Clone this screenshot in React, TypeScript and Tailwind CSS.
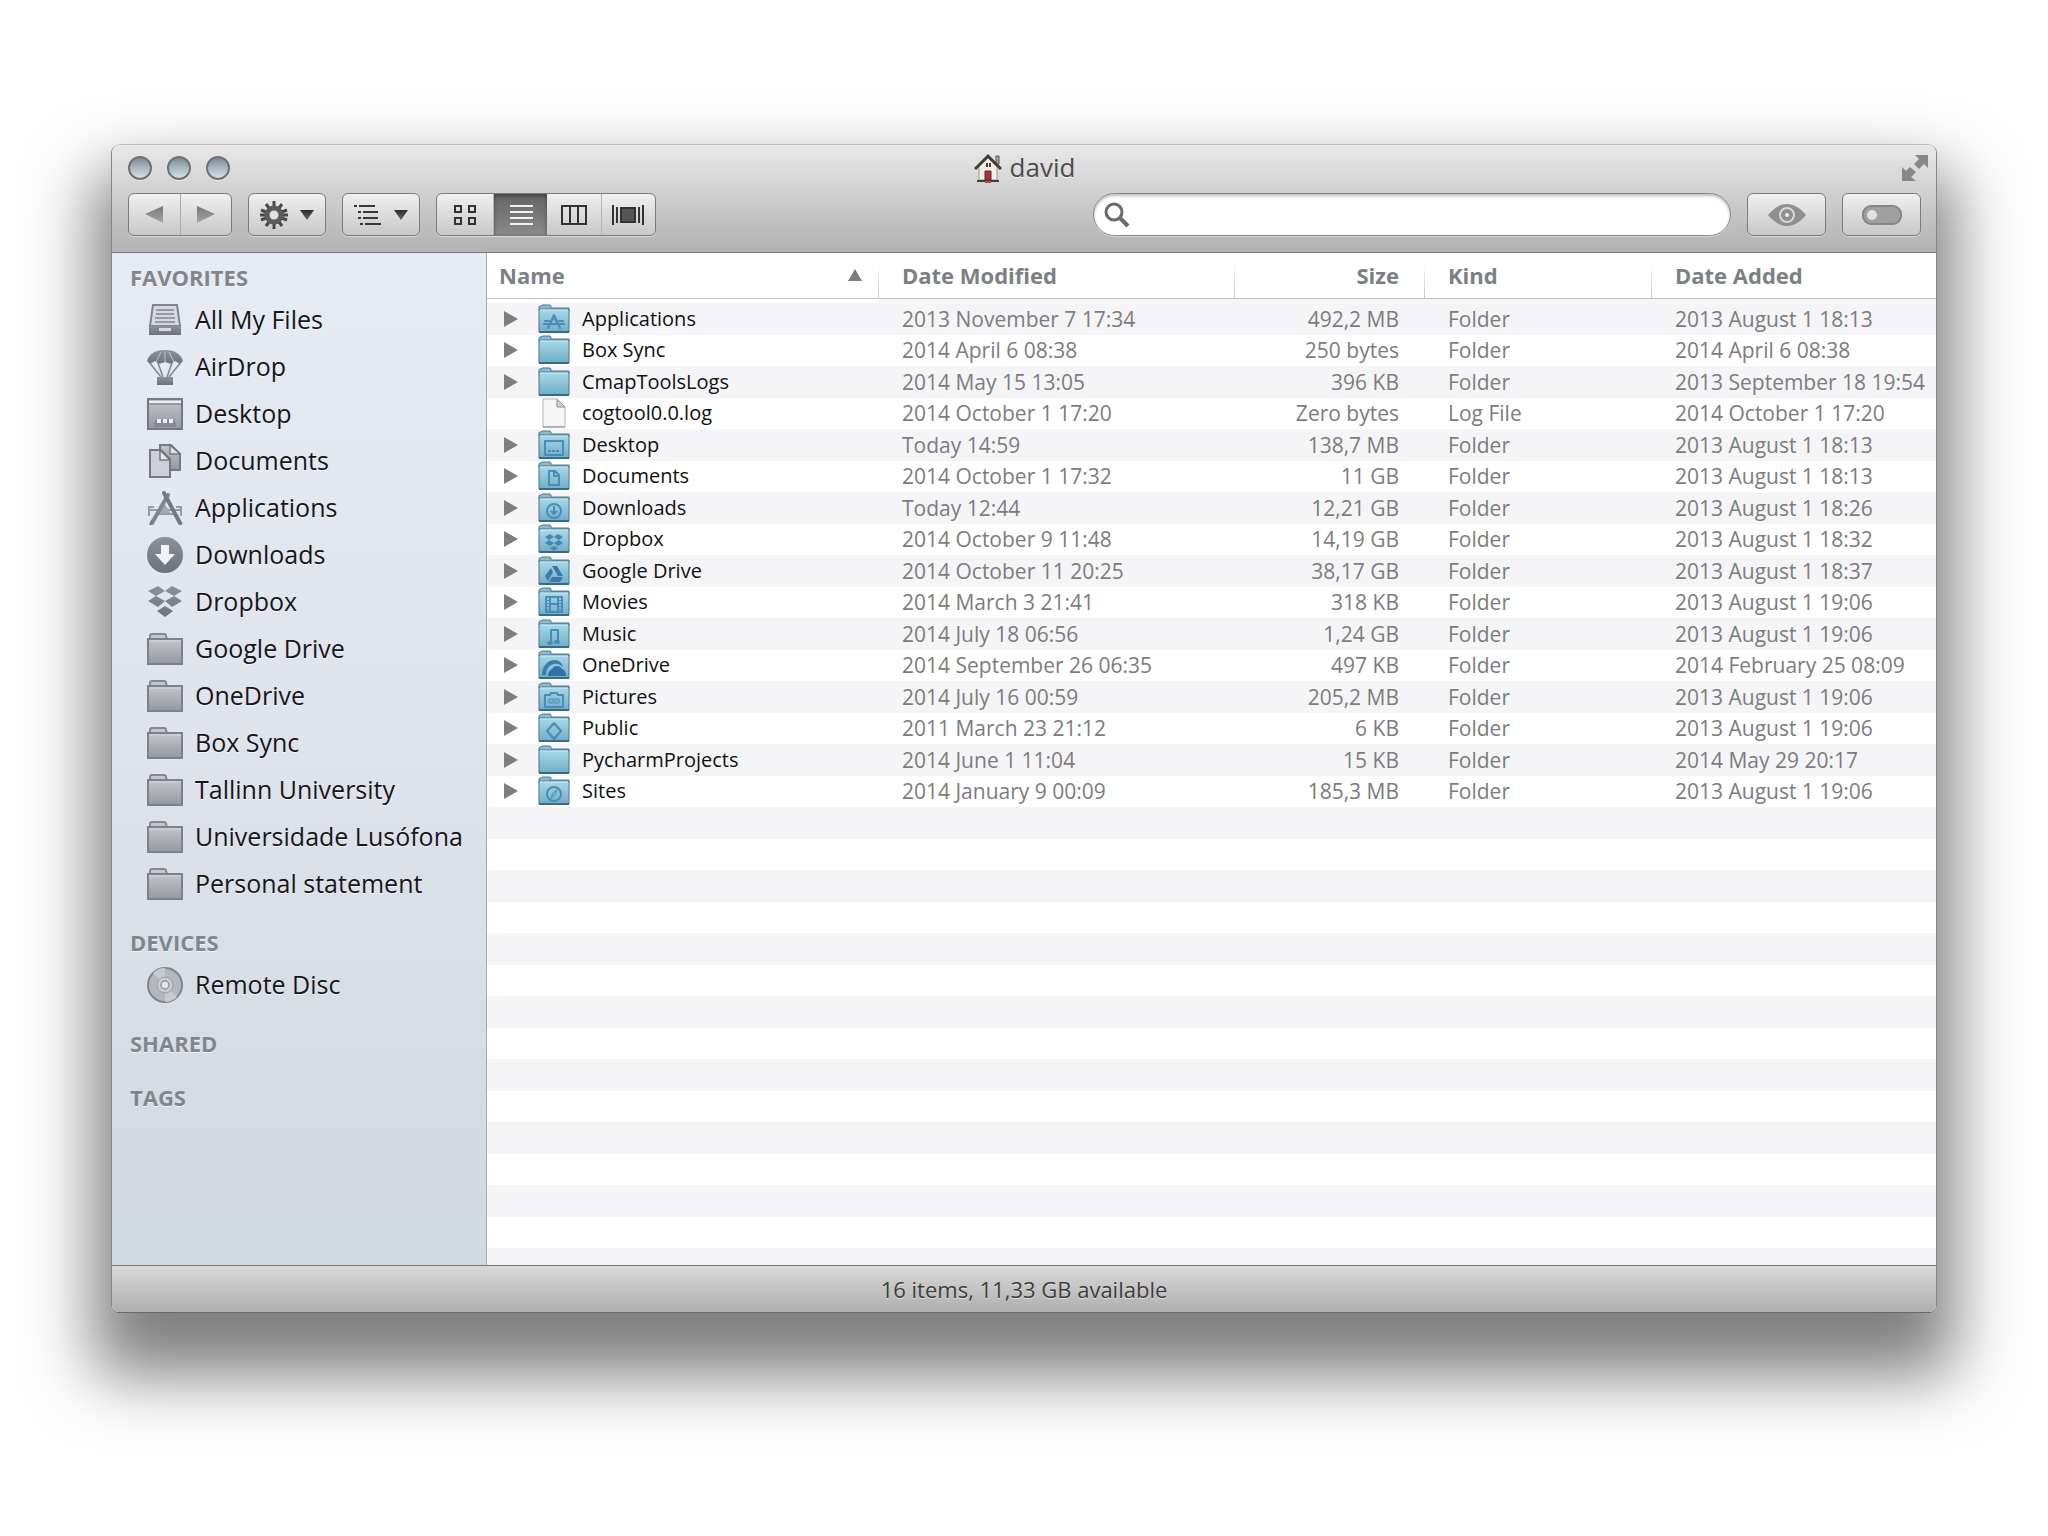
import { useState } from 'react';
import type { ReactNode } from 'react';

type SidebarIconName =
  | 'allFiles'
  | 'airdrop'
  | 'desktop'
  | 'documents'
  | 'applications'
  | 'downloads'
  | 'dropbox'
  | 'folder'
  | 'disc';

interface SidebarItem {
  label: string;
  icon: SidebarIconName;
}

interface SidebarSection {
  title: string;
  items: SidebarItem[];
}

interface FileRow {
  name: string;
  modified: string;
  size: string;
  kind: string;
  added: string;
}

const sections: SidebarSection[] = [
  {
    title: 'FAVORITES',
    items: [
      { label: 'All My Files', icon: 'allFiles' },
      { label: 'AirDrop', icon: 'airdrop' },
      { label: 'Desktop', icon: 'desktop' },
      { label: 'Documents', icon: 'documents' },
      { label: 'Applications', icon: 'applications' },
      { label: 'Downloads', icon: 'downloads' },
      { label: 'Dropbox', icon: 'dropbox' },
      { label: 'Google Drive', icon: 'folder' },
      { label: 'OneDrive', icon: 'folder' },
      { label: 'Box Sync', icon: 'folder' },
      { label: 'Tallinn University', icon: 'folder' },
      { label: 'Universidade Lusófona', icon: 'folder' },
      { label: 'Personal statement', icon: 'folder' },
    ],
  },
  { title: 'DEVICES', items: [{ label: 'Remote Disc', icon: 'disc' }] },
  { title: 'SHARED', items: [] },
  { title: 'TAGS', items: [] },
];

const files: FileRow[] = [
  { name: 'Applications', modified: '2013 November 7 17:34', size: '492,2 MB', kind: 'Folder', added: '2013 August 1 18:13' },
  { name: 'Box Sync', modified: '2014 April 6 08:38', size: '250 bytes', kind: 'Folder', added: '2014 April 6 08:38' },
  { name: 'CmapToolsLogs', modified: '2014 May 15 13:05', size: '396 KB', kind: 'Folder', added: '2013 September 18 19:54' },
  { name: 'cogtool0.0.log', modified: '2014 October 1 17:20', size: 'Zero bytes', kind: 'Log File', added: '2014 October 1 17:20' },
  { name: 'Desktop', modified: 'Today 14:59', size: '138,7 MB', kind: 'Folder', added: '2013 August 1 18:13' },
  { name: 'Documents', modified: '2014 October 1 17:32', size: '11 GB', kind: 'Folder', added: '2013 August 1 18:13' },
  { name: 'Downloads', modified: 'Today 12:44', size: '12,21 GB', kind: 'Folder', added: '2013 August 1 18:26' },
  { name: 'Dropbox', modified: '2014 October 9 11:48', size: '14,19 GB', kind: 'Folder', added: '2013 August 1 18:32' },
  { name: 'Google Drive', modified: '2014 October 11 20:25', size: '38,17 GB', kind: 'Folder', added: '2013 August 1 18:37' },
  { name: 'Movies', modified: '2014 March 3 21:41', size: '318 KB', kind: 'Folder', added: '2013 August 1 19:06' },
  { name: 'Music', modified: '2014 July 18 06:56', size: '1,24 GB', kind: 'Folder', added: '2013 August 1 19:06' },
  { name: 'OneDrive', modified: '2014 September 26 06:35', size: '497 KB', kind: 'Folder', added: '2014 February 25 08:09' },
  { name: 'Pictures', modified: '2014 July 16 00:59', size: '205,2 MB', kind: 'Folder', added: '2013 August 1 19:06' },
  { name: 'Public', modified: '2011 March 23 21:12', size: '6 KB', kind: 'Folder', added: '2013 August 1 19:06' },
  { name: 'PycharmProjects', modified: '2014 June 1 11:04', size: '15 KB', kind: 'Folder', added: '2014 May 29 20:17' },
  { name: 'Sites', modified: '2014 January 9 00:09', size: '185,3 MB', kind: 'Folder', added: '2013 August 1 19:06' },
];

// Gradients shared by all the icons
function IconDefs() {
  return (
    <svg className="absolute h-0 w-0" aria-hidden="true">
      <defs>
        <linearGradient id="blueFolder" x1="0" y1="0" x2="0" y2="1">
          <stop offset="0" stopColor="#a9d9e9" />
          <stop offset="1" stopColor="#70adc8" />
        </linearGradient>
        <linearGradient id="grayFolder" x1="0" y1="0" x2="0" y2="1">
          <stop offset="0" stopColor="#c3c6cb" />
          <stop offset="1" stopColor="#94989f" />
        </linearGradient>
        <linearGradient id="grayGlyph" x1="0" y1="0" x2="0" y2="1">
          <stop offset="0" stopColor="#8d9199" />
          <stop offset="1" stopColor="#6d7179" />
        </linearGradient>
        <linearGradient id="arrowGray" x1="0" y1="0" x2="0" y2="1">
          <stop offset="0" stopColor="#787878" />
          <stop offset="1" stopColor="#a6a6a6" />
        </linearGradient>
        <linearGradient id="darkGlyph" x1="0" y1="0" x2="0" y2="1">
          <stop offset="0" stopColor="#2e2e2e" />
          <stop offset="1" stopColor="#626262" />
        </linearGradient>
      </defs>
    </svg>
  );
}

// Embossed marks on the blue folders, on the 32x30 folder canvas
const folderMarks: Record<string, ReactNode> = {
  Applications: (
    <g strokeWidth="2" strokeLinecap="round">
      <path d="M16 11 10 24M16 11l6 13M6 20h20M11 17H7M21 17h4" />
      <path d="m16 15 3 5h-6z" strokeWidth="1" />
    </g>
  ),
  Desktop: (
    <g strokeWidth="2">
      <path d="M7 11h18v14H7z" />
      <path d="M10 21h12" strokeDasharray="3 1" />
    </g>
  ),
  Documents: <path d="M11 10h6l4 4v10H11zM16 10v5h5" strokeWidth="2" />,
  Downloads: (
    <g strokeWidth="2">
      <circle cx="16" cy="18" r="7" />
      <path d="M16 13v7M13 18l3 3 3-3" />
    </g>
  ),
  Dropbox: <path d="m12 10 4 3-5 3-4-3zM20 10l-4 3 5 3 4-3zM7 19l4-3 5 3-4 3zM25 19l-4-3-5 3 4 3zM12 24l4-2 4 2-4 3z" fill="#4586ad" stroke="none" />,
  'Google Drive': <path d="M14 10h5l6 10h-5zM13 12l2 4-5 9-3-5zM14 21h11l-3 5H11z" fill="#3b7ba5" stroke="none" />,
  Movies: (
    <g strokeWidth="2">
      <path d="M8 10h16v15H8zM12 10v15M20 10v15M12 17h8" />
      <path d="M10 10v15M22 10v15" strokeDasharray="1 2" />
    </g>
  ),
  Music: (
    <g strokeWidth="2">
      <path d="M13 23V11h7v11" />
      <ellipse cx="12" cy="24" rx="2" ry="1" />
      <ellipse cx="19" cy="23" rx="2" ry="1" />
    </g>
  ),
  OneDrive: (
    <g stroke="none">
      <path d="M4 25c0-9 6-15 13-15 4 0 7 3 8 7-3-3-6-4-9-3-5 1-8 5-8 11z" fill="#3a7ba9" />
      <path d="M10 26c0-4 2-6 4-7 2-4 8-4 10 0 3 1 4 3 4 7z" fill="#2f72a3" />
    </g>
  ),
  Pictures: (
    <g strokeWidth="2">
      <path d="M7 13h5l1-2h6l1 2h5v12H7z" />
      <path d="M11 17h10v4H11z" strokeWidth="1" />
      <path d="m13 21 2-3 2 2 2-2" strokeWidth="1" />
    </g>
  ),
  Public: (
    <g strokeWidth="2">
      <path d="m16 10 7 8-7 8-7-8z" />
      <path d="M13 12h6M13 24h6" strokeWidth="1" />
    </g>
  ),
  Sites: (
    <g strokeWidth="2">
      <circle cx="16" cy="18" r="7" />
      <path d="m19 14-2 5-4 3 2-5z" strokeWidth="1" />
    </g>
  ),
};

function FolderIcon({ name }: { name: string }) {
  return (
    <svg viewBox="0 0 32 30" className="block h-[30px] w-8 shrink-0" aria-hidden="true">
      <path d="M1 6V3q0-1 1-1h1l1-1h8l1 1v2h18v3z" fill="#8fb9cd" stroke="#4b7d97" />
      <path d="M1 5h30v23H1z" fill="url(#blueFolder)" stroke="#44748e" />
      <path d="M2 6h28" stroke="#c9ebf5" />
      <path d="M1 28h30" stroke="#3c6a84" strokeWidth="2" />
      <g fill="none" stroke="#4a8db4" strokeLinejoin="round">{folderMarks[name]}</g>
    </svg>
  );
}

function DocumentIcon() {
  return (
    <svg viewBox="0 0 32 30" className="block h-[30px] w-8 shrink-0" aria-hidden="true">
      <path d="M5 1h14l8 8v20H5z" fill="#f6f6f6" stroke="#b5b5b5" />
      <path d="M5 29h22" stroke="#8c8c8c" />
      <path d="M19 1v8h8z" fill="#cfcfcf" stroke="#8f8f8f" />
    </svg>
  );
}

const sidebarIcons: Record<SidebarIconName, ReactNode> = {
  allFiles: (
    <>
      <path d="M6 3h24l3 21H3z" fill="#d8dae1" stroke="#80848e" strokeWidth="2" />
      <path d="M9 8h18M9 12h18M8 16h20M8 20h20" stroke="#80848e" strokeWidth="1.5" />
      <path d="M2 24h32v9H2z" fill="url(#grayGlyph)" />
      <path d="M12 26h12v3H12z" fill="#d8dae1" />
    </>
  ),
  airdrop: (
    <>
      <path d="M0 12C2 4 10 1 18 1s16 3 18 11l-3 3-5-3-4 3-6-2-6 2-4-3-5 3z" fill="url(#grayGlyph)" />
      <path d="M14 3 9 13M22 3l5 10M18 2v11" stroke="#c0c4cc" strokeWidth="1" />
      <path d="m2 13 12 15M34 13 22 28M11 14l5 14M25 14l-5 14" stroke="#80848e" strokeWidth="1.5" fill="none" />
      <path d="M10 28h16v8H10z" fill="url(#grayGlyph)" />
    </>
  ),
  desktop: (
    <>
      <path d="M1 3h34v30H1z" fill="url(#grayFolder)" stroke="#747882" strokeWidth="2" />
      <path d="M2 6h32" stroke="#eceef3" strokeWidth="2" />
      <path d="M2 8h32" stroke="#747882" strokeWidth="1" />
      <path d="M7 31v-3l2-5h18l2 5v3z" fill="#858994" />
      <path d="M10 23h4v4h-4zM16 23h4v4h-4zM22 23h4v4h-4z" fill="#eceef3" />
    </>
  ),
  documents: (
    <>
      <path d="M13 2h11l9 9v16H13z" fill="url(#grayFolder)" stroke="#757984" strokeWidth="2" />
      <path d="M23 2v9h10z" fill="#e2e4ea" stroke="#757984" strokeWidth="1.5" />
      <path d="M3 7h11l9 9v18H3z" fill="#cdd0d7" stroke="#757984" strokeWidth="2" />
      <path d="M13 7v10h10z" fill="#e6e8ee" stroke="#757984" strokeWidth="1.5" />
    </>
  ),
  applications: (
    <>
      <path d="M2 26v-9h5M34 26v-9h-5M10 24h16M2 20h32" stroke="#969aa4" strokeWidth="2" fill="none" />
      <path d="M18 14l6 10H12z" fill="#a3a7b0" />
      <path d="M21 5 5 33" stroke="#80848e" strokeWidth="4" strokeLinecap="round" />
      <path d="m17 3 16 30" stroke="#747882" strokeWidth="4" strokeLinecap="round" />
      <path d="m5 30-2 5M31 29l4 5" stroke="#747882" strokeWidth="2" />
    </>
  ),
  downloads: (
    <>
      <circle cx="18" cy="18" r="18" fill="url(#grayGlyph)" />
      <path d="M14 8h8v9h6L18 28 8 17h6z" fill="#f1f3f8" />
    </>
  ),
  dropbox: (
    <path
      d="m11 2 7 5-9 5-8-5zM25 2l-7 5 9 5 8-5zM9 12l9 5-7 6-10-6zM27 12l-9 5 7 6 10-6zM10 27l8-5 8 5-8 6z"
      fill="url(#grayGlyph)"
    />
  ),
  folder: (
    <>
      <path d="M3 9V5q0-2 2-2h12q2 0 2 2l1 3" fill="#c4c7ce" stroke="#858993" strokeWidth="2" />
      <path d="M1 8h34v25H1z" fill="url(#grayFolder)" stroke="#7d818b" strokeWidth="2" />
      <path d="M2 10h32" stroke="#d5d8de" strokeWidth="1" />
    </>
  ),
  disc: (
    <>
      <circle cx="18" cy="18" r="17" fill="#b4b7bd" stroke="#80848c" strokeWidth="2" />
      <path d="M18 18 6 6a17 17 0 0 1 12-5zM18 18l12 12a17 17 0 0 1-12 5z" fill="#c6c9ce" />
      <circle cx="18" cy="18" r="8" fill="#c9ccd1" stroke="#989ba3" />
      <circle cx="18" cy="18" r="4" fill="#e3e6ec" stroke="#92959d" strokeWidth="1.5" />
    </>
  ),
};

function Sidebar() {
  return (
    <nav className="w-[375px] shrink-0 border-r border-[#a9abb1] bg-linear-to-b from-[#e7ebf3] via-[#dfe3eb] to-[#d0d8e0] pt-[5px] [text-shadow:0_1px_0_#ffffffb0]">
      {sections.map((section) => (
        <section key={section.title} className="mb-4">
          <h2 className="h-[38px] pl-[18px] text-[22px] leading-[38px] font-bold text-[#80858e]">{section.title}</h2>
          {section.items.length > 0 && (
            <ul>
              {section.items.map((item) => (
                <li key={item.label}>
                  <a
                    href="#"
                    className="flex h-[47px] items-center gap-3 pl-[35px] text-[25px] font-medium whitespace-nowrap text-[#15161b]"
                  >
                    <svg viewBox="0 0 36 36" className="size-9 shrink-0" fill="none" aria-hidden="true">
                      {sidebarIcons[item.icon]}
                    </svg>
                    {item.label}
                  </a>
                </li>
              ))}
            </ul>
          )}
        </section>
      ))}
    </nav>
  );
}

function Caret() {
  return (
    <svg viewBox="0 0 14 10" className="h-[10px] w-[14px]" aria-hidden="true">
      <path d="M0 0h14L7 10z" fill="url(#darkGlyph)" />
    </svg>
  );
}

const viewIcons: { id: string; label: string; icon: ReactNode }[] = [
  {
    id: 'icons',
    label: 'Icon view',
    icon: <path d="M6 2h6v6H6zM20 2h6v6h-6zM6 14h6v6H6zM20 14h6v6h-6z" />,
  },
  {
    id: 'list',
    label: 'List view',
    icon: <path d="M5 2h23M5 8h23M5 14h23M5 20h23" />,
  },
  {
    id: 'columns',
    label: 'Column view',
    icon: <path d="M4 2h24v18H4zM12 2v18M20 2v18" />,
  },
  {
    id: 'coverflow',
    label: 'Cover flow view',
    icon: (
      <>
        <path d="M1 1v20M31 1v20" />
        <path d="M5 3v16M27 3v16" />
        <path d="M9 4h14v14H9z" fill="#555" />
      </>
    ),
  },
];

const buttonStyle = 'flex h-[43px] items-center justify-center rounded-[6px] border border-[#7b7b7b] bg-linear-to-b from-[#f0f0f0] to-[#c8c8c8] shadow-[0_1px_0_#ffffff70]';

function Toolbar() {
  const [view, setView] = useState('list');
  const [query, setQuery] = useState('');

  return (
    <header className="border-b border-[#757575] bg-linear-to-b from-[#e9e9e9] to-[#b2b2b2] pr-[15px] pb-4 pl-4">
      {/* Title bar */}
      <div className="grid h-[45px] grid-cols-3 items-center">
        <div className="flex gap-[15px]">
          {['Close', 'Minimize', 'Zoom'].map((label) => (
            <button
              key={label}
              aria-label={label}
              className="size-6 rounded-full border-2 border-[#6c7277] bg-linear-to-b from-[#7d8a94] via-[#a9b8c3] to-[#d6dfe4] shadow-[0_1px_0_#ffffff90]"
            />
          ))}
        </div>
        <h1 className="flex items-center justify-center gap-2 text-[26px] font-medium text-[#4a4a4a] [text-shadow:0_1px_0_#ffffffa0]">
          <svg viewBox="0 0 28 30" className="h-[30px] w-7" aria-hidden="true">
            <path d="M22 3h3v8h-3z" fill="#b5a49b" stroke="#555" />
            <path d="M5 14 14 5l9 9v13H5z" fill="#f6efe8" stroke="#a09890" />
            <path d="M1 16 14 3l13 13" fill="none" stroke="#3f3f3f" strokeWidth="3" />
            <path d="M12 10h2v4h-2zM15 10h2v4h-2z" fill="#3c3c3c" />
            <path d="M11 18h6v9h-6z" fill="#a83238" stroke="#6e2226" />
            <path d="M3 28h22" stroke="#2f4536" strokeWidth="2" />
            <path d="M11 29h6" stroke="#c0444a" strokeWidth="2" />
          </svg>
          david
        </h1>
        <button aria-label="Enter full screen" className="-mr-2 justify-self-end">
          <svg viewBox="0 0 28 28" className="block size-7" aria-hidden="true">
            <path d="M14 1h13v13l-4-4-5 5-5-5 5-5z" fill="#888888" />
            <path d="M1 13l4 4 4-4 6 5-5 5 5 4H1z" fill="#888888" />
          </svg>
        </button>
      </div>

      <div className="mt-[3px] flex items-center gap-4">
        <div className={`${buttonStyle} w-[104px]`}>
          <button aria-label="Back" className="flex h-full flex-1 items-center justify-center border-r border-[#aaaaaa]">
            <svg viewBox="0 0 18 17" className="h-[17px] w-[18px]" aria-hidden="true">
              <path d="M0 8 18 0v17z" fill="url(#arrowGray)" />
            </svg>
          </button>
          <button aria-label="Forward" className="flex h-full flex-1 items-center justify-center">
            <svg viewBox="0 0 18 17" className="h-[17px] w-[18px]" aria-hidden="true">
              <path d="M18 8 0 0v17z" fill="url(#arrowGray)" />
            </svg>
          </button>
        </div>

        <button aria-label="Actions" className={`${buttonStyle} w-[78px] gap-3`}>
          <svg viewBox="0 0 28 28" className="size-7" aria-hidden="true">
            <g stroke="#484848" strokeWidth="3">
              <path d="M14 0v28M0 14h28M6 3l16 22M22 3 6 25M1 9l26 10M27 9 1 19" />
            </g>
            <circle cx="14" cy="14" r="7" fill="#e2e2e2" stroke="#5b5b5b" strokeWidth="5" />
          </svg>
          <Caret />
        </button>

        <button aria-label="Arrange by" className={`${buttonStyle} w-[78px] gap-3`}>
          <svg viewBox="0 0 28 22" className="h-[22px] w-7" stroke="#383838" strokeWidth="2" aria-hidden="true">
            <path d="M5 2h16M9 8h15M9 14h15M11 20h16" />
            <path d="M0 2h3M4 8h3M4 14h3M6 20h3" />
          </svg>
          <Caret />
        </button>

        <div className={`${buttonStyle} w-[220px] overflow-hidden`} role="group" aria-label="View">
          {viewIcons.map((item) => (
            <button
              key={item.id}
              aria-label={item.label}
              aria-pressed={view === item.id}
              onClick={() => setView(item.id)}
              className={`flex h-full items-center justify-center first:w-[57px] not-first:flex-1 ${
                view === item.id
                  ? 'bg-linear-to-b from-[#656565] to-[#8a8a8a] text-[#f2f2f2] shadow-[inset_0_2px_4px_#00000060]'
                  : 'border-r border-[#b4b4b4] text-[#333333] last:border-r-0'
              }`}
            >
              <svg viewBox="0 0 32 22" className="h-[22px] w-8" fill="none" stroke="currentColor" strokeWidth="2" aria-hidden="true">
                {item.icon}
              </svg>
            </button>
          ))}
        </div>

        <label className="ml-auto flex h-[43px] w-[638px] items-center gap-2 rounded-full border border-[#858585] bg-white px-[10px] shadow-[inset_0_2px_3px_#00000040,0_1px_0_#ffffff70]">
          <svg viewBox="0 0 26 26" className="size-[26px] shrink-0" fill="none" stroke="#6a6a6a" aria-hidden="true">
            <circle cx="10" cy="10" r="8" strokeWidth="3" />
            <path d="m16 16 8 8" strokeWidth="4" />
          </svg>
          <input
            type="search"
            aria-label="Search"
            value={query}
            onChange={(e) => setQuery(e.target.value)}
            className="min-w-0 flex-1 bg-transparent text-[21px] text-[#222222] outline-none"
          />
        </label>

        <button aria-label="Quick Look" className={`${buttonStyle} w-[79px]`}>
          <svg viewBox="0 0 38 24" className="h-6 w-[38px]" aria-hidden="true">
            <path d="M0 12C6 5 12 1 19 1s13 4 19 11c-6 7-12 11-19 11S6 19 0 12z" fill="#8f8f8f" />
            <circle cx="19" cy="12" r="7" fill="#8f8f8f" stroke="#d8d8d8" strokeWidth="2" />
            <circle cx="19" cy="12" r="2" fill="#f0f0f0" />
          </svg>
        </button>
        <button aria-label="Toggle" className={`${buttonStyle} w-[79px]`}>
          <svg viewBox="0 0 40 20" className="h-5 w-10" aria-hidden="true">
            <rect x="1" y="1" width="38" height="18" rx="8" fill="#a0a0a0" stroke="#868686" strokeWidth="2" />
            <circle cx="10" cy="10" r="5" fill="#e2e2e2" />
          </svg>
        </button>
      </div>
    </header>
  );
}

const headCell = 'h-[45px] border-b border-[#c2c2c2] bg-white p-0 text-left font-bold';
const headDivider = 'bg-[linear-gradient(to_bottom,transparent_20%,#c4c4c4)] bg-[length:1px_100%] bg-right bg-no-repeat';

function FileTable() {
  return (
    <main className="min-w-0 flex-1 overflow-hidden bg-[repeating-linear-gradient(to_bottom,#f5f5f8_0_32px,#ffffff_32px_63px)] bg-[position:0_50px]">
      <table className="w-full table-fixed border-collapse text-[21px] whitespace-nowrap text-[#7c7c7e]">
        <colgroup>
          <col />
          <col className="w-[356px]" />
          <col className="w-[190px]" />
          <col className="w-[227px]" />
          <col className="w-[284px]" />
        </colgroup>
        <thead className="text-[22px] text-[#7b8086]">
          <tr>
            <th className={`${headCell} ${headDivider}`} aria-sort="ascending">
              <button className="flex w-full items-center justify-between pr-[17px] pl-3 font-bold">
                Name
                <svg viewBox="0 0 14 12" className="h-3 w-[14px]" aria-hidden="true">
                  <path d="M7 0l7 12H0z" fill="#7c7c7c" />
                </svg>
              </button>
            </th>
            <th className={`${headCell} ${headDivider}`}>
              <button className="pl-[23px] font-bold">Date Modified</button>
            </th>
            <th className={`${headCell} ${headDivider}`}>
              <button className="block w-full pr-[26px] text-right font-bold">Size</button>
            </th>
            <th className={`${headCell} ${headDivider}`}>
              <button className="pl-[23px] font-bold">Kind</button>
            </th>
            <th className={headCell}>
              <button className="pl-[23px] font-bold">Date Added</button>
            </th>
          </tr>
        </thead>
        <tbody className="font-medium before:block before:h-1 before:bg-white before:content-['']">
          {files.map((file) => (
            <tr key={file.name} className="leading-[30px] odd:h-8 even:h-[31px]">
              <td className="p-0">
                <div className="flex items-center pl-[17px] text-[20px] text-[#111111]">
                  {file.kind === 'Folder' ? (
                    <button aria-label={`Expand ${file.name}`} className="mr-5 w-[14px]">
                      <svg viewBox="0 0 14 16" className="block h-4 w-[14px]" aria-hidden="true">
                        <path d="M0 0l14 8-14 8z" fill="#7e7e7e" />
                      </svg>
                    </button>
                  ) : (
                    <span className="mr-5 w-[14px]" />
                  )}
                  {file.kind === 'Folder' ? <FolderIcon name={file.name} /> : <DocumentIcon />}
                  <span className="ml-3">{file.name}</span>
                </div>
              </td>
              <td className="p-0 pl-[23px]">{file.modified}</td>
              <td className="p-0 pr-[26px] text-right">{file.size}</td>
              <td className="p-0 pl-[23px]">{file.kind}</td>
              <td className="p-0 pl-[23px]">{file.added}</td>
            </tr>
          ))}
        </tbody>
      </table>
    </main>
  );
}

export default function App() {
  return (
    <div className="flex min-h-screen bg-white px-[111px] pt-36 pb-[223px] font-['Lucida_Grande','Open_Sans','Noto_Sans',sans-serif]">
      <IconDefs />
      <div className="flex min-w-0 flex-1 flex-col overflow-hidden rounded-t-[9px] rounded-b-[7px] border border-[#868686] border-t-[#bdbdbd] border-b-[#6a6a6a] shadow-[0_45px_66px_18px_rgba(0,0,0,0.5)]">
        <Toolbar />
        <div className="flex flex-1">
          <Sidebar />
          <FileTable />
        </div>
        <footer className="flex h-[47px] items-center justify-center border-t border-[#777777] bg-linear-to-b from-[#d9d9d9] to-[#afafaf] text-[22px] font-medium text-[#3c3c3c] [text-shadow:0_1px_0_#ffffff90]">
          16 items, 11,33 GB available
        </footer>
      </div>
    </div>
  );
}
